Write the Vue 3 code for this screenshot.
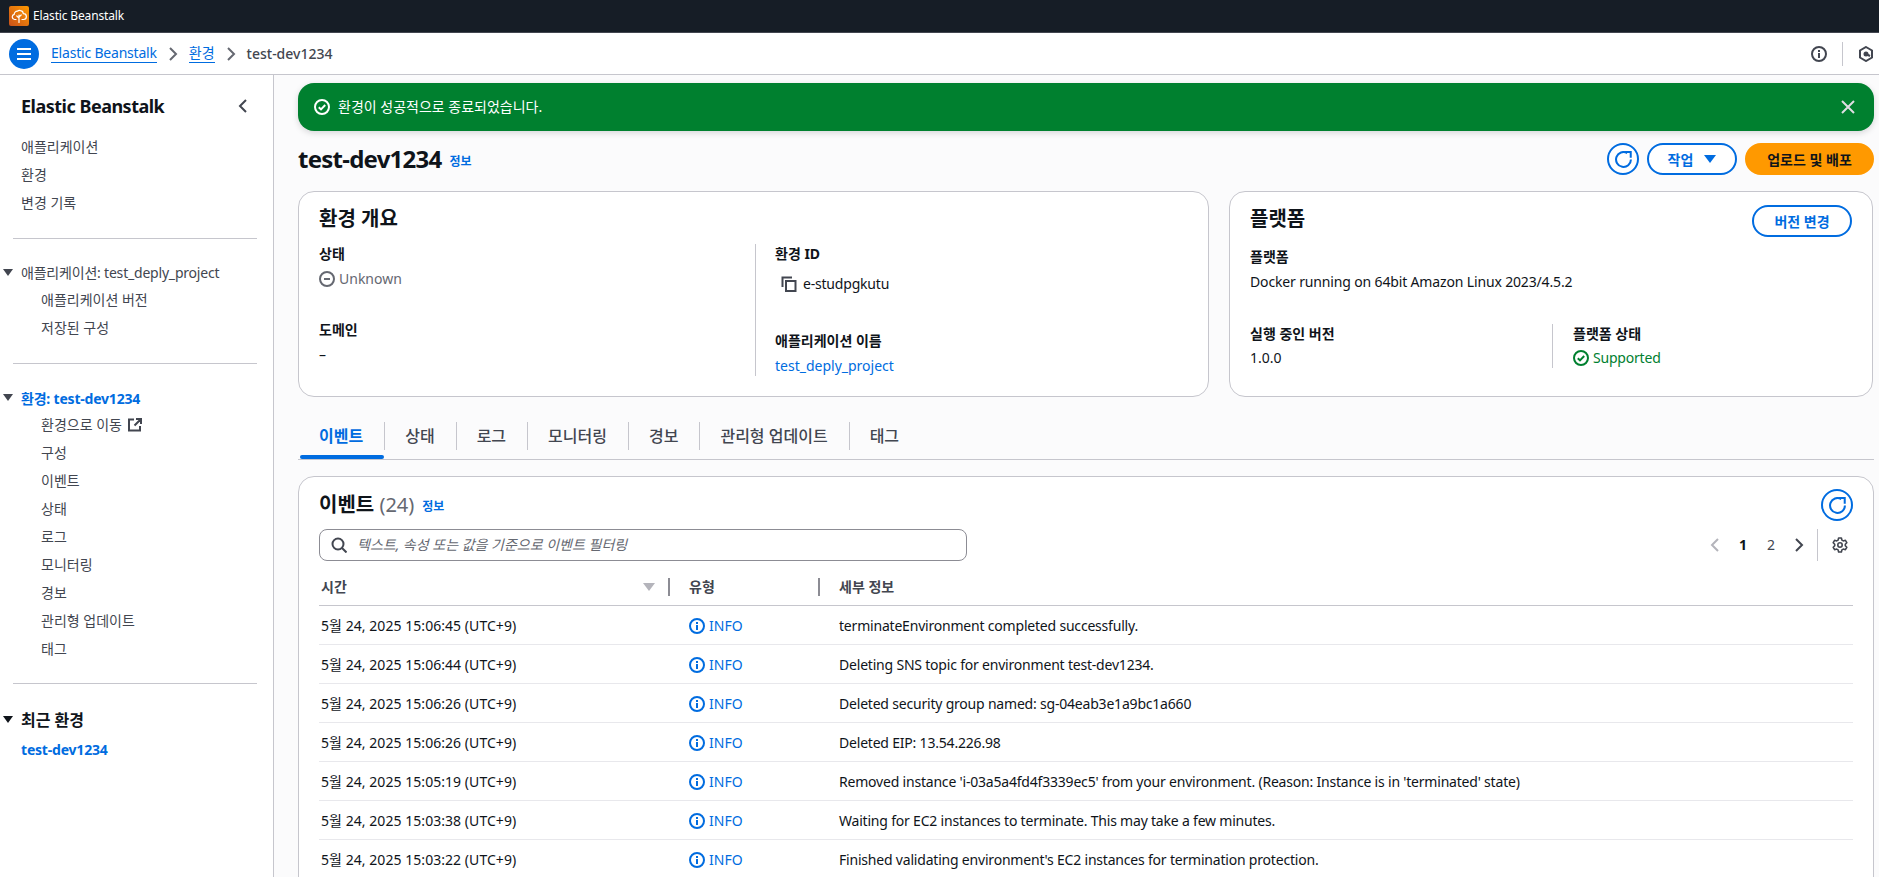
<script setup>
const topNav = ['애플리케이션', '환경', '변경 기록']
const appItems = ['애플리케이션 버전', '저장된 구성']
const envItems = ['구성', '이벤트', '상태', '로그', '모니터링', '경보', '관리형 업데이트', '태그']
const tabs = ['이벤트', '상태', '로그', '모니터링', '경보', '관리형 업데이트', '태그']
const events = [
  ['5월 24, 2025 15:06:45 (UTC+9)', 'terminateEnvironment completed successfully.'],
  ['5월 24, 2025 15:06:44 (UTC+9)', 'Deleting SNS topic for environment test-dev1234.'],
  ['5월 24, 2025 15:06:26 (UTC+9)', 'Deleted security group named: sg-04eab3e1a9bc1a660'],
  ['5월 24, 2025 15:06:26 (UTC+9)', 'Deleted EIP: 13.54.226.98'],
  ['5월 24, 2025 15:05:19 (UTC+9)', "Removed instance 'i-03a5a4fd4f3339ec5' from your environment. (Reason: Instance is in 'terminated' state)"],
  ['5월 24, 2025 15:03:38 (UTC+9)', 'Waiting for EC2 instances to terminate. This may take a few minutes.'],
  ['5월 24, 2025 15:03:22 (UTC+9)', "Finished validating environment's EC2 instances for termination protection."],
]
</script>

<template>
  <div class="page">
    <header class="topbar">
      <span class="logo">
        <svg width="16" height="16" viewBox="0 0 16 16" fill="none" stroke="#fff" stroke-width="1.2" stroke-linejoin="round" stroke-linecap="round">
          <path d="M5 11.500H3.600A2.600 2.600 0 0 1 3.200 6.400 3.200 3.200 0 0 1 6.400 3.200 3.400 3.400 0 0 1 9.600 2.600a3 3 0 0 1 2.600 3 2.900 2.900 0 0 1 .4 5.900H11" />
          <path d="M8 14.500V7M8 10 5.800 8M8 9l2.200-2" />
        </svg>
      </span>
      <span class="service">Elastic Beanstalk</span>
    </header>

    <div class="crumbbar">
      <button class="menu">
        <svg width="16" height="14" viewBox="0 0 16 14" stroke="#fff" stroke-width="2"><path d="M1 2h14M1 7h14M1 12h14" /></svg>
      </button>
      <a class="crumb latin">Elastic Beanstalk</a>
      <svg class="sep" width="10" height="14" viewBox="0 0 10 14" fill="none" stroke="#656871" stroke-width="2"><path d="M2 1l6 6-6 6" /></svg>
      <a class="crumb">환경</a>
      <svg class="sep" width="10" height="14" viewBox="0 0 10 14" fill="none" stroke="#656871" stroke-width="2"><path d="M2 1l6 6-6 6" /></svg>
      <span class="crumb-current">test-dev1234</span>
      <span class="spacer"></span>
      <svg width="16" height="16" viewBox="0 0 16 16" fill="none" stroke="#424650" stroke-width="2"><circle cx="8" cy="8" r="7" /><path d="M8 7v5M8 4v2" /></svg>
      <span class="bar-div"></span>
      <svg class="hex" width="16" height="16" viewBox="0 0 16 16" fill="none" stroke="#424650" stroke-width="2"><path d="M8 1l6 3.500v7L8 15l-6-3.500v-7z" /><circle cx="8" cy="8" r="1.500" fill="#424650" /><path d="M8 8l4 2" /></svg>
    </div>

    <div class="body">
      <aside class="side">
        <div class="side-head">
          <span class="side-title">Elastic Beanstalk</span>
          <svg width="10" height="14" viewBox="0 0 10 14" fill="none" stroke="#424650" stroke-width="2"><path d="M8 1L2 7l6 6" /></svg>
        </div>
        <ul class="nav top">
          <li v-for="t in topNav" :key="t">{{ t }}</li>
        </ul>
        <hr class="divider first" />
        <div class="group-row app latin"><i class="tri"></i>애플리케이션: test_deply_project</div>
        <ul class="nav sub">
          <li v-for="t in appItems" :key="t">{{ t }}</li>
        </ul>
        <hr class="divider second" />
        <div class="group-row active latin"><i class="tri"></i>환경: test-dev1234</div>
        <ul class="nav sub">
          <li>환경으로 이동
            <svg class="ext" width="14" height="14" viewBox="0 0 14 14" fill="none" stroke="#424650" stroke-width="2"><path d="M6 1.500H1v11h11V8M8 1h5v5M13 1L6.500 7.500" /></svg>
          </li>
          <li v-for="t in envItems" :key="t">{{ t }}</li>
        </ul>
        <hr class="divider last" />
        <div class="group-row recent"><i class="tri dark"></i>최근 환경</div>
        <a class="recent-link latin">test-dev1234</a>
      </aside>

      <main class="main">
        <div class="flash">
          <svg width="16" height="16" viewBox="0 0 16 16" fill="none" stroke="#fff" stroke-width="2"><circle cx="8" cy="8" r="7" /><path d="M4.800 8.200l2.200 2.200 4.200-4.400" /></svg>
          <span class="flash-text">환경이 성공적으로 종료되었습니다.</span>
          <svg width="14" height="14" viewBox="0 0 14 14" fill="none" stroke="#dedee3" stroke-width="2"><path d="M1 1l12 12M13 1L1 13" /></svg>
        </div>

        <div class="head">
          <h1>test-dev1234</h1>
          <a class="info">정보</a>
          <span class="spacer"></span>
          <button class="btn icon">
            <svg width="17" height="17" viewBox="0 0 16 16" fill="none" stroke="#006ce0" stroke-width="1.900"><path d="M15 8A7 7 0 1 1 11.500 1.900" /><path d="M9.500 1H14.800V6.300" /></svg>
          </button>
          <button class="btn action">작업<i class="caret"></i></button>
          <button class="btn primary">업로드 및 배포</button>
        </div>

        <div class="cards">
          <section class="card overview">
            <h2>환경 개요</h2>
            <div class="cols">
              <div class="col left">
                <div class="kv"><b>상태</b><span class="status"><svg width="16" height="16" viewBox="0 0 16 16" fill="none" stroke="#656871" stroke-width="2"><circle cx="8" cy="8" r="7" /><path d="M5 8h6" /></svg>Unknown</span></div>
                <div class="kv domain"><b>도메인</b><span class="dash">–</span></div>
              </div>
              <div class="col right">
                <div class="kv"><b>환경 ID</b><span class="copy latin"><svg width="16" height="16" viewBox="0 0 16 16" fill="none" stroke="#424650" stroke-width="2"><path d="M1.500 11V1.500H11" /><path d="M5 5h9.500v10H5z" /></svg>e-studpgkutu</span></div>
                <div class="kv appname"><b>애플리케이션 이름</b><a class="link">test_deply_project</a></div>
              </div>
            </div>
          </section>

          <section class="card platform">
            <div class="plat-head">
              <h2>플랫폼</h2>
              <button class="btn change">버전 변경</button>
            </div>
            <div class="kv first-kv"><b>플랫폼</b><span class="docker">Docker running on 64bit Amazon Linux 2023/4.5.2</span></div>
            <div class="plat-cols">
              <div class="kv"><b>실행 중인 버전</b><span>1.0.0</span></div>
              <div class="kv state"><b>플랫폼 상태</b><span class="supported latin"><svg width="16" height="16" viewBox="0 0 16 16" fill="none" stroke="#00802f" stroke-width="2"><circle cx="8" cy="8" r="7" /><path d="M4.800 8.200l2.200 2.200 4.200-4.400" /></svg>Supported</span></div>
            </div>
          </section>
        </div>

        <nav class="tabs">
          <span v-for="(t, i) in tabs" :key="t" class="tab" :class="{ on: i === 0 }"><span class="tab-label">{{ t }}</span></span>
        </nav>

        <section class="card events">
          <div class="ev-head">
            <h2>이벤트 <span class="count">(24)</span></h2>
            <a class="info">정보</a>
            <span class="spacer"></span>
            <button class="btn icon">
              <svg width="17" height="17" viewBox="0 0 16 16" fill="none" stroke="#006ce0" stroke-width="1.900"><path d="M15 8A7 7 0 1 1 11.500 1.900" /><path d="M9.500 1H14.800V6.300" /></svg>
            </button>
          </div>
          <div class="tools">
            <div class="search">
              <svg width="16" height="16" viewBox="0 0 16 16" fill="none" stroke="#424650" stroke-width="2"><circle cx="7" cy="7" r="5.500" /><path d="M11 11l4.500 4.500" /></svg>
              <span>텍스트, 속성 또는 값을 기준으로 이벤트 필터링</span>
            </div>
            <div class="pager">
              <svg width="10" height="14" viewBox="0 0 10 14" fill="none" stroke="#b4b4bb" stroke-width="2"><path d="M8 1L2 7l6 6" /></svg>
              <b>1</b>
              <span>2</span>
              <svg class="next" width="10" height="14" viewBox="0 0 10 14" fill="none" stroke="#424650" stroke-width="2"><path d="M2 1l6 6-6 6" /></svg>
              <i class="pg-div"></i>
              <svg width="16" height="16" viewBox="0 0 16 16" fill="none" stroke="#424650" stroke-width="1.600" stroke-linejoin="round"><circle cx="8" cy="8" r="2.200" /><path d="M6.600 1h2.800l.5 2.100 1.400.8 2.100-.6 1.400 2.400-1.500 1.500v1.600l1.500 1.500-1.400 2.400-2.100-.6-1.400.8-.5 2.100H6.600l-.5-2.100-1.400-.8-2.100.6-1.400-2.400L2.700 8.800V7.200L1.200 5.700l1.400-2.400 2.100.6 1.400-.8z" /></svg>
            </div>
          </div>

          <div class="table">
            <div class="row header">
              <div class="c time">시간<i class="sort"></i></div>
              <div class="c type">유형</div>
              <div class="c detail">세부 정보</div>
            </div>
            <div v-for="(e, i) in events" :key="i" class="row">
              <div class="c time when">{{ e[0] }}</div>
              <div class="c type info-cell">
                <svg width="16" height="16" viewBox="0 0 16 16" fill="none" stroke="#006ce0" stroke-width="2"><circle cx="8" cy="8" r="7" /><path d="M8 7v5M8 4v2" /></svg>
                INFO
              </div>
              <div class="c detail latin">{{ e[1] }}</div>
            </div>
          </div>
        </section>
      </main>
    </div>
  </div>
</template>

<style>
html, body { margin: 0; overflow: hidden; height: 877px; background: #fff; }
</style>

<style scoped>
* { box-sizing: border-box; }
.page {
  width: 1879px; height: 877px; overflow: hidden;
  font-family: "Noto Sans", "Noto Sans CJK KR", sans-serif;
  font-size: 14px; line-height: 20px; color: #0f141a; background: #fff;
}
.latin { letter-spacing: -0.2px; }
.when { letter-spacing: 0.05px; }
.docker { letter-spacing: -0.15px; }
.spacer { flex: 1; }
.topbar { height: 33px; background: #161d26; border-bottom: 1px solid #424650; display: flex; align-items: center; padding-left: 9px; gap: 4px; }
.logo { width: 20px; height: 20px; border-radius: 2px; background: linear-gradient(45deg, #c8511b, #ff9900); display: flex; align-items: center; justify-content: center; }
.service { color: #fff; font-size: 12px; letter-spacing: -0.15px; }
.crumbbar { height: 42px; border-bottom: 1px solid #c6c6cd; display: flex; align-items: center; padding-left: 9px; }
.menu { width: 30px; height: 30px; border-radius: 50%; background: #006ce0; border: 0; padding: 0; display: flex; align-items: center; justify-content: center; margin-right: 12px; }
.crumb { color: #006ce0; border-bottom: 1px solid #006ce0; line-height: 18px; }
.sep { margin: 0 11px; }
.crumb-current { color: #424650; font-weight: 500; }
.bar-div { width: 1px; height: 24px; background: #c6c6cd; margin: 0 15px; }
.hex { margin-right: 5px; }
.body { display: flex; height: 802px; }

.side { width: 274px; flex: none; border-right: 1px solid #c6c6cd; background: #fff; padding-top: 18px; color: #424650; }
.side-head { display: flex; align-items: center; justify-content: space-between; padding: 0 25px 0 21px; height: 26px; }
.side-title { font-size: 18px; font-weight: 700; color: #0f141a; letter-spacing: -0.5px; }
.nav { list-style: none; margin: 0; padding: 0; }
.nav li { height: 28px; line-height: 28px; display: flex; align-items: center; }
.nav.top { margin-top: 14px; padding-left: 21px; }
.nav.sub { padding-left: 41px; }
.divider { border: 0; height: 1px; background: #c6c6cd; margin: 20px 16px 20px 13px; }
.divider.first { margin-top: 21px; }
.divider.second { margin-top: 21px; }
.divider.last { margin-top: 20px; margin-bottom: 22px; }
.group-row { position: relative; padding-left: 21px; height: 28px; line-height: 28px; margin-top: -1px; }
.group-row.app { line-height: 30px; }
.group-row.active { color: #006ce0; font-weight: 700; line-height: 32px; }
.group-row.recent { color: #0f141a; font-weight: 700; font-size: 16px; line-height: 30px; }
.tri { position: absolute; left: 3px; top: 11px; width: 0; height: 0; border-left: 5px solid transparent; border-right: 5px solid transparent; border-top: 7px solid #424650; }
.tri.dark { border-top-color: #0f141a; }
.ext { margin-left: 6px; }
.recent-link { display: block; padding-left: 21px; color: #006ce0; font-weight: 700; height: 28px; line-height: 30px; margin-top: 2px; }

.main { flex: 1; min-width: 0; background: #fbfbfc; padding: 8px 5px 0 24px; }
.flash { height: 48px; background: #00802f; border-radius: 16px; color: #fff; display: flex; align-items: center; padding: 0 19px 0 16px; box-shadow: 0 2px 6px rgba(0,7,22,.15); }
.flash-text { flex: 1; margin-left: 8px; }
.head { display: flex; align-items: center; margin-top: 12px; height: 32px; }
h1 { margin: 0; font-size: 24px; line-height: 30px; font-weight: 700; letter-spacing: -0.75px; }
.info { color: #006ce0; font-size: 12px; font-weight: 700; margin-left: 8px; margin-top: 5px; }
.btn { font-family: inherit; font-size: 14px; font-weight: 700; border-radius: 20px; height: 32px; background: #fff; border: 2px solid #006ce0; color: #006ce0; padding: 0; display: inline-flex; align-items: center; justify-content: center; }
.btn.icon { width: 32px; border-radius: 50%; }
.btn.action { width: 90px; margin-left: 8px; }
.caret { margin-left: 11px; width: 0; height: 0; border-left: 6px solid transparent; border-right: 6px solid transparent; border-top: 8px solid #006ce0; }
.btn.primary { width: 129px; margin-left: 8px; background: #ff9900; border-color: #ff9900; color: #0f141a; }
.cards { display: grid; grid-template-columns: 911px 644px; gap: 20px; margin-top: 16px; }
.card { background: #fff; border: 1px solid #c6c6cd; border-radius: 16px; }
.overview, .platform { height: 206px; padding: 13px 20px 0; }
h2 { margin: 0; font-size: 20px; line-height: 28px; font-weight: 700; }
.kv { display: flex; flex-direction: column; }
.kv b { font-weight: 700; height: 20px; }
.cols { display: flex; margin-top: 11px; height: 132px; }
.col.left { width: 436px; }
.col.right { flex: 1; border-left: 1px solid #c6c6cd; padding-left: 19px; }
.kv.domain { margin-top: 31px; }
.dash { margin-top: 5px; }
.status { color: #656871; display: flex; align-items: center; gap: 4px; margin-top: 5px; }
.copy { display: flex; align-items: center; gap: 6px; margin: 10px 0 0 6px; }
.kv.appname { margin-top: 37px; }
.link { color: #006ce0; margin-top: 5px; }
.plat-head { display: flex; align-items: flex-start; justify-content: space-between; height: 42px; }
.btn.change { width: 100px; height: 32px; }
.first-kv > span { margin-top: 5px; }
.plat-cols { display: grid; grid-template-columns: 302px 1fr; margin-top: 32px; height: 44px; }
.plat-cols .kv > span { margin-top: 4px; }
.kv.state { border-left: 1px solid #c6c6cd; padding-left: 20px; }
.supported { color: #00802f; display: flex; align-items: center; gap: 4px; }
.tabs { display: flex; height: 38px; margin-top: 25px; border-bottom: 1px solid #c6c6cd; }
.tab { position: relative; height: 37px; padding: 0 21px; }
.tab-label { display: block; height: 28px; line-height: 28px; font-weight: 500; font-size: 16px; color: #424650; white-space: nowrap; }
.tab + .tab::before { content: ""; position: absolute; left: 0; top: 0; width: 1px; height: 28px; background: #c6c6cd; }
.tab.on .tab-label { color: #006ce0; font-weight: 700; }
.tab.on::after { content: ""; position: absolute; left: 2px; right: 0; bottom: 0; height: 4px; border-radius: 2px; background: #006ce0; }
.events { margin-top: 16px; height: 600px; padding: 12px 20px 0; }
.ev-head { display: flex; align-items: flex-start; height: 40px; }
.ev-head h2 { line-height: 28px; margin-top: 2px; }
.ev-head .info { margin-top: 8px; }
.count { font-weight: 400; color: #656871; }
.tools { display: flex; justify-content: space-between; align-items: center; }
.search { width: 648px; height: 32px; border: 1px solid #8c8c94; border-radius: 8px; background: #fff; display: flex; align-items: center; gap: 10px; padding-left: 11px; }
.search span { font-style: italic; color: #656871; font-size: 14px; }
.pager { display: flex; align-items: center; margin-right: 5px; }
.pager b { margin-left: 19px; width: 8px; font-weight: 700; text-align: center; }
.pager span { margin-left: 20px; width: 8px; color: #424650; text-align: center; }
.next { margin-left: 19px; }
.pg-div { width: 1px; height: 32px; background: #c6c6cd; margin: 0 14px 0 13px; }
.table { margin-top: 12px; }
.row { display: grid; grid-template-columns: 349px 150px 1fr; height: 39px; align-items: center; border-bottom: 1px solid #e8e8ec; padding-top: 2px; }
.row.header { height: 33px; border-bottom: 1px solid #c6c6cd; font-weight: 700; color: #424650; padding: 0 0 4px; }
.c { padding-left: 2px; white-space: nowrap; }
.type { padding-left: 21px; }
.detail { padding-left: 21px; }
.header .c { position: relative; height: 18px; line-height: 18px; }
.header .type, .header .detail { border-left: 2px solid #8c8c94; padding-left: 19px; }
.sort { position: absolute; right: 13px; top: 5px; width: 0; height: 0; border-left: 6px solid transparent; border-right: 6px solid transparent; border-top: 8px solid #b4b4bb; }
.info-cell { color: #006ce0; display: flex; align-items: center; gap: 4px; }
</style>
